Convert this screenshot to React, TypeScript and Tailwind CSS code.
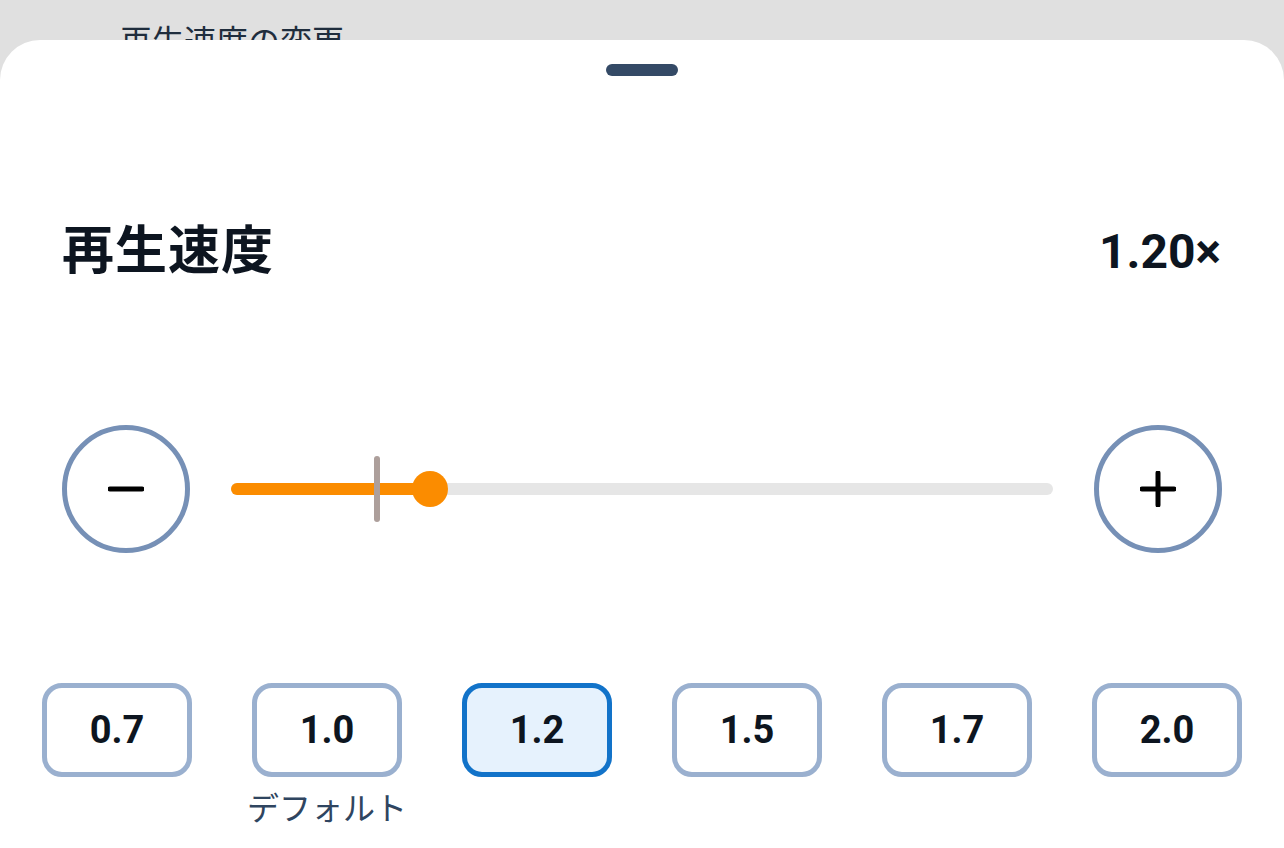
import { useState } from 'react';

const PRESETS = ['0.7', '1.0', '1.2', '1.5', '1.7', '2.0'];
const MIN = 0.45;
const MAX = 3.55;

export default function App() {
  const [speed, setSpeed] = useState(1.2);

  const pct = ((speed - MIN) / (MAX - MIN)) * 100;
  const defaultPct = ((1.0 - MIN) / (MAX - MIN)) * 100;

  return (
    <div
      className="w-[1284px] h-[848px] overflow-hidden bg-[#e0e0e0] flex flex-col"
      style={{ fontFamily: 'Roboto, "Noto Sans CJK JP", sans-serif' }}
    >
      {/* page behind the sheet */}
      <div className="h-[40px] overflow-hidden pl-[120px] pt-[22px]">
        <div className="text-[32px] leading-[40px] text-[#1f2d3d] whitespace-nowrap">再生速度の変更</div>
      </div>

      {/* bottom sheet */}
      <div className="flex-1 bg-white rounded-t-[40px] flex flex-col pt-[24px]">
        <div className="self-center w-[72px] h-[12px] rounded-full bg-[#344a66]" />

        <div className="mt-[144px] flex items-center justify-between pl-[62px] pr-[63px] h-[64px]">
          <span className="text-[52px] font-bold text-[#0d1520] tracking-[1px]">再生速度</span>
          <span className="text-[48px] font-bold text-[#0d1520]">{speed.toFixed(2)}×</span>
        </div>

        <div className="mt-[141px] flex items-center gap-[41px] px-[62px]">
          <button
            onClick={() => setSpeed((s) => Math.max(MIN, +(s - 0.1).toFixed(2)))}
            className="w-[128px] h-[128px] rounded-full border-[5px] border-[#7690b6] flex items-center justify-center shrink-0"
          >
            <svg width="36" height="36" viewBox="0 0 36 36">
              <path d="M2 18h32" stroke="#000" strokeWidth="5" strokeLinecap="round" />
            </svg>
          </button>

          <div className="relative flex-1 h-[72px] flex items-center">
            <div className="w-full h-[12px] rounded-full bg-[#e6e6e6]" />
            <div
              className="absolute left-0 h-[12px] rounded-full bg-[#fb8c00]"
              style={{ width: `${pct}%` }}
            />
            <div
              className="absolute top-[3px] w-[6px] h-[66px] -ml-[3px] rounded-full bg-[#ad9f9b]"
              style={{ left: `${defaultPct}%` }}
            />
            <div
              className="absolute w-[36px] h-[36px] -ml-[18px] rounded-full bg-[#fb8c00]"
              style={{ left: `${pct}%` }}
            />
          </div>

          <button
            onClick={() => setSpeed((s) => Math.min(MAX, +(s + 0.1).toFixed(2)))}
            className="w-[128px] h-[128px] rounded-full border-[5px] border-[#7690b6] flex items-center justify-center shrink-0"
          >
            <svg width="36" height="36" viewBox="0 0 36 36">
              <path d="M2 18h32M18 2v32" stroke="#000" strokeWidth="5" strokeLinecap="round" />
            </svg>
          </button>
        </div>

        <div className="mt-[130px] grid grid-cols-6 px-[12px]">
          {PRESETS.map((p) => {
            const active = Number(p) === speed;
            return (
              <div key={p} className="flex flex-col items-center">
                <button
                  onClick={() => setSpeed(Number(p))}
                  className={`w-[150px] h-[94px] rounded-[20px] border-[5px] flex items-center justify-center text-[38px] font-bold text-[#0d1520] ${
                    active ? 'border-[#1273c9] bg-[#e6f2fd]' : 'border-[#9ab0cf] bg-white'
                  }`}
                >
                  {p}
                </button>
                {p === '1.0' && (
                  <span className="mt-[12px] text-[32px] leading-[40px] text-[#2f4560]">デフォルト</span>
                )}
              </div>
            );
          })}
        </div>
      </div>
    </div>
  );
}
